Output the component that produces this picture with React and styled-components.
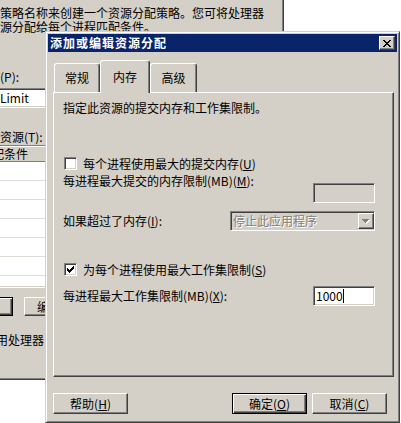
import { createGlobalStyle, styled, css } from 'styled-components';

const FACE = '#d4d0c8';
const SHADOW = '#808080';
const DARK = '#404040';

const GlobalStyle = createGlobalStyle`
  html, body {
    margin: 0;
    padding: 0;
    background: #fff;
  }
  body {
    font-family: 'Noto Sans CJK SC', 'Noto Sans', sans-serif;
    font-size: 12px;
    color: #000;
  }
`;

const sunken = css`
  border: 1px solid;
  border-color: ${SHADOW} #fff #fff ${SHADOW};
  box-shadow: inset 1px 1px ${DARK}, inset -1px -1px ${FACE};
`;

const raised = css`
  border: 1px solid;
  border-color: #fff ${DARK} ${DARK} #fff;
  box-shadow: inset -1px -1px ${SHADOW};
`;

const defaultRaised = css`
  border: 1px solid #000;
  box-shadow: inset 1px 1px #fff, inset -1px -1px ${DARK}, inset -2px -2px ${SHADOW};
`;

const Desktop = styled.div`
  position: relative;
  width: 401px;
  height: 423px;
  overflow: hidden;
  background: #fff;
`;

/* window behind the dialog, only its right part shows */
const BackWindow = styled.div`
  position: absolute;
  left: 0;
  top: 0;
  width: 284px;
  height: 380px;
  box-sizing: border-box;
  padding-top: 6px;
  background: ${FACE};
  border-right: 1px solid ${DARK};
  border-bottom: 1px solid ${DARK};
  box-shadow: inset -1px -1px ${SHADOW};
  line-height: 14px;
  white-space: nowrap;
  overflow: hidden;
`;

const BackLine = styled.div`
  height: 14px;
`;

const BackLabel = styled.div`
  margin-top: ${p => p.$top}px;
  margin-left: ${p => p.$indent || 0}px;
  height: 14px;
`;

const BackInput = styled.div`
  ${sunken};
  box-sizing: border-box;
  margin-top: 4px;
  margin-left: -20px;
  width: 70px;
  height: 20px;
  padding-left: 19px;
  line-height: 17px;
  background: #fff;
`;

const BackList = styled.div`
  ${sunken};
  box-sizing: border-box;
  margin-top: 1px;
  margin-left: -30px;
  width: 80px;
  height: 143px;
  background: #fff;
  overflow: hidden;
`;

const ListHeader = styled.div`
  height: 16px;
  box-sizing: border-box;
  padding-left: 9px;
  line-height: 15px;
  background: ${FACE};
  border-bottom: 1px solid ${SHADOW};
  box-shadow: inset 0 1px #fff;
`;

const ListRow = styled.div`
  height: 19px;
  box-sizing: border-box;
  border-bottom: 1px solid #dedcd6;
`;

const BackButtons = styled.div`
  display: flex;
  margin-top: 9px;
`;

const BackButton = styled.div`
  ${p => (p.$default ? defaultRaised : raised)};
  box-sizing: border-box;
  flex: none;
  width: 75px;
  height: 19px;
  margin-left: ${p => p.$left}px;
  background: ${FACE};
  line-height: 17px;
  text-align: center;
`;

/* the dialog in front */
const Dialog = styled.div`
  position: absolute;
  left: 45px;
  top: 31px;
  width: 355px;
  height: 392px;
  box-sizing: border-box;
  padding: 2px;
  display: flex;
  flex-direction: column;
  background: ${FACE};
  border: 1px solid;
  border-color: ${FACE} ${DARK} ${DARK} ${FACE};
  box-shadow: inset 1px 1px #fff, inset -1px -1px ${SHADOW};
`;

const TitleBar = styled.div`
  display: flex;
  align-items: center;
  height: 18px;
  padding: 0 2px;
  background: #0a246a;
  color: #fff;
  font-weight: bold;
  letter-spacing: 1px;
  line-height: 18px;
`;

const CloseButton = styled.div`
  ${raised};
  box-sizing: border-box;
  display: flex;
  align-items: center;
  justify-content: center;
  width: 16px;
  height: 14px;
  margin-left: auto;
  background: ${FACE};
`;

const Body = styled.div`
  display: flex;
  flex-direction: column;
  padding: 8px 3px 0 5px;
`;

const TabStrip = styled.div`
  display: flex;
  align-items: flex-end;
  height: 32px;
  padding-left: 1px;
`;

const Tab = styled.div`
  position: relative;
  z-index: ${p => (p.$active ? 1 : 0)};
  box-sizing: border-box;
  display: flex;
  align-items: center;
  justify-content: center;
  width: ${p => p.$width}px;
  height: ${p => (p.$active ? 33 : 29)}px;
  margin-bottom: ${p => (p.$active ? -1 : 0)}px;
  padding-bottom: ${p => (p.$active ? 1 : 0)}px;
  background: ${FACE};
  border: 1px solid;
  border-color: #fff ${DARK} transparent #fff;
  border-bottom: none;
  border-radius: 3px 3px 0 0;
  box-shadow: inset -1px 0 ${SHADOW};
  line-height: 14px;
`;

const Panel = styled.div`
  box-sizing: border-box;
  display: flex;
  flex-direction: column;
  height: 285px;
  padding: 8px 18px 0 9px;
  border: 1px solid;
  border-color: #fff ${DARK} ${DARK} #fff;
  box-shadow: inset -1px -1px ${SHADOW};
`;

const Description = styled.p`
  margin: 0;
  line-height: 14px;
`;

const CheckRow = styled.label`
  display: flex;
  align-items: center;
  gap: 6px;
  height: 13px;
  margin-top: ${p => p.$top}px;
  margin-left: 1px;
  line-height: 13px;
`;

const CheckBox = styled.span`
  ${sunken};
  box-sizing: border-box;
  display: flex;
  align-items: center;
  justify-content: center;
  flex: none;
  width: 13px;
  height: 13px;
  background: #fff;
`;

const FieldRow = styled.div`
  display: flex;
  justify-content: space-between;
  align-items: ${p => p.$align || 'center'};
  margin-top: ${p => p.$top}px;
`;

const Label = styled.span`
  line-height: 14px;
  white-space: nowrap;
`;

const TextBox = styled.div`
  ${sunken};
  box-sizing: border-box;
  display: flex;
  align-items: center;
  flex: none;
  width: 62px;
  height: 20px;
  margin-top: ${p => p.$top || 0}px;
  padding: 0 2px;
  background: ${p => (p.$disabled ? FACE : '#fff')};
  line-height: 16px;
`;

const Caret = styled.span`
  display: inline-block;
  width: 1px;
  height: 14px;
  background: #000;
`;

const Combo = styled.div`
  ${sunken};
  box-sizing: border-box;
  display: flex;
  align-items: center;
  width: 145px;
  height: 20px;
  padding-left: 2px;
  background: ${FACE};
`;

const DisabledText = styled.span`
  color: ${SHADOW};
  text-shadow: 1px 1px #fff;
  line-height: 16px;
`;

const DropButton = styled.span`
  ${raised};
  box-sizing: border-box;
  display: flex;
  align-items: center;
  justify-content: center;
  width: 16px;
  height: 16px;
  margin-left: auto;
  background: ${FACE};
`;

const Footer = styled.div`
  display: flex;
  gap: 5px;
  margin-top: 16px;
  padding-right: 7px;
`;

const Button = styled.button`
  ${p => (p.$default ? defaultRaised : raised)};
  box-sizing: border-box;
  width: 75px;
  height: 21px;
  margin-left: ${p => (p.$push ? 'auto' : '0')};
  padding: 0;
  background: ${FACE};
  color: #000;
  font: inherit;
  line-height: 17px;
  text-align: center;
`;

const Key = styled.span`
  text-decoration: underline;
`;

const CloseGlyph = () => (
  <svg width="8" height="7" viewBox="0 0 8 7" shapeRendering="crispEdges">
    <path
      fill="#000"
      d="M0 0h2v1h-2z M6 0h2v1h-2z M1 1h2v1h-2z M5 1h2v1h-2z M2 2h4v1h-4z M3 3h2v1h-2z M2 4h4v1h-4z M1 5h2v1h-2z M5 5h2v1h-2z M0 6h2v1h-2z M6 6h2v1h-2z"
    />
  </svg>
);

const CheckGlyph = () => (
  <svg width="7" height="7" viewBox="0 0 7 7" shapeRendering="crispEdges">
    <path
      fill="#000"
      d="M6 0h1v1h-1z M5 1h2v1h-2z M0 2h1v1h-1z M4 2h3v1h-3z M0 3h2v1h-2z M3 3h3v1h-3z M0 4h5v1h-5z M1 5h3v1h-3z M2 6h1v1h-1z"
    />
  </svg>
);

const ArrowGlyph = () => (
  <svg width="8" height="5" viewBox="0 0 8 5" shapeRendering="crispEdges">
    <path fill="#fff" d="M1 1h7v1h-7z M2 2h5v1h-5z M3 3h3v1h-3z M4 4h1v1h-1z" />
    <path fill={SHADOW} d="M0 0h7v1h-7z M1 1h5v1h-5z M2 2h3v1h-3z M3 3h1v1h-1z" />
  </svg>
);

const tabs = [
  { label: '常规', width: 46 },
  { label: '内存', width: 50, active: true },
  { label: '高级', width: 47 },
];

const App = () => (
  <>
    <GlobalStyle />
    <Desktop>
      <BackWindow>
        <BackLine>策略名称来创建一个资源分配策略。您可将处理器</BackLine>
        <BackLine>源分配给每个进程匹配条件。</BackLine>
        <BackLabel $top={36}>(P):</BackLabel>
        <BackInput>Limit</BackInput>
        <BackLabel $top={22}>资源(T):</BackLabel>
        <BackList>
          <ListHeader>匹配条件</ListHeader>
          {[0, 1, 2, 3, 4, 5, 6].map(i => (
            <ListRow key={i} />
          ))}
        </BackList>
        <BackButtons>
          <BackButton $default $left={-62}>添加(D)...</BackButton>
          <BackButton $left={11}>编辑(E)...</BackButton>
        </BackButtons>
        <BackLabel $top={17} $indent={-4}>用处理器</BackLabel>
      </BackWindow>

      <Dialog>
        <TitleBar>
          添加或编辑资源分配
          <CloseButton>
            <CloseGlyph />
          </CloseButton>
        </TitleBar>
        <Body>
          <TabStrip>
            {tabs.map(t => (
              <Tab key={t.label} $width={t.width} $active={t.active}>
                {t.label}
              </Tab>
            ))}
          </TabStrip>
          <Panel>
            <Description>指定此资源的提交内存和工作集限制。</Description>

            <CheckRow $top={42}>
              <CheckBox />
              <span>
                每个进程使用最大的提交内存(<Key>U</Key>)
              </span>
            </CheckRow>

            <FieldRow $top={4} $align="flex-start">
              <Label>
                每进程最大提交的内存限制(MB)(<Key>M</Key>):
              </Label>
              <TextBox $disabled $top={9} />
            </FieldRow>

            <FieldRow $top={8}>
              <Label>
                如果超过了内存(<Key>I</Key>):
              </Label>
              <Combo>
                <DisabledText>停止此应用程序</DisabledText>
                <DropButton>
                  <ArrowGlyph />
                </DropButton>
              </Combo>
            </FieldRow>

            <CheckRow $top={32}>
              <CheckBox>
                <CheckGlyph />
              </CheckBox>
              <span>
                为每个进程使用最大工作集限制(<Key>S</Key>)
              </span>
            </CheckRow>

            <FieldRow $top={10}>
              <Label>
                每进程最大工作集限制(MB)(<Key>X</Key>):
              </Label>
              <TextBox>
                1000
                <Caret />
              </TextBox>
            </FieldRow>
          </Panel>

          <Footer>
            <Button>
              帮助(<Key>H</Key>)
            </Button>
            <Button $push $default>
              确定(<Key>O</Key>)
            </Button>
            <Button>
              取消(<Key>C</Key>)
            </Button>
          </Footer>
        </Body>
      </Dialog>
    </Desktop>
  </>
);

export default App;
